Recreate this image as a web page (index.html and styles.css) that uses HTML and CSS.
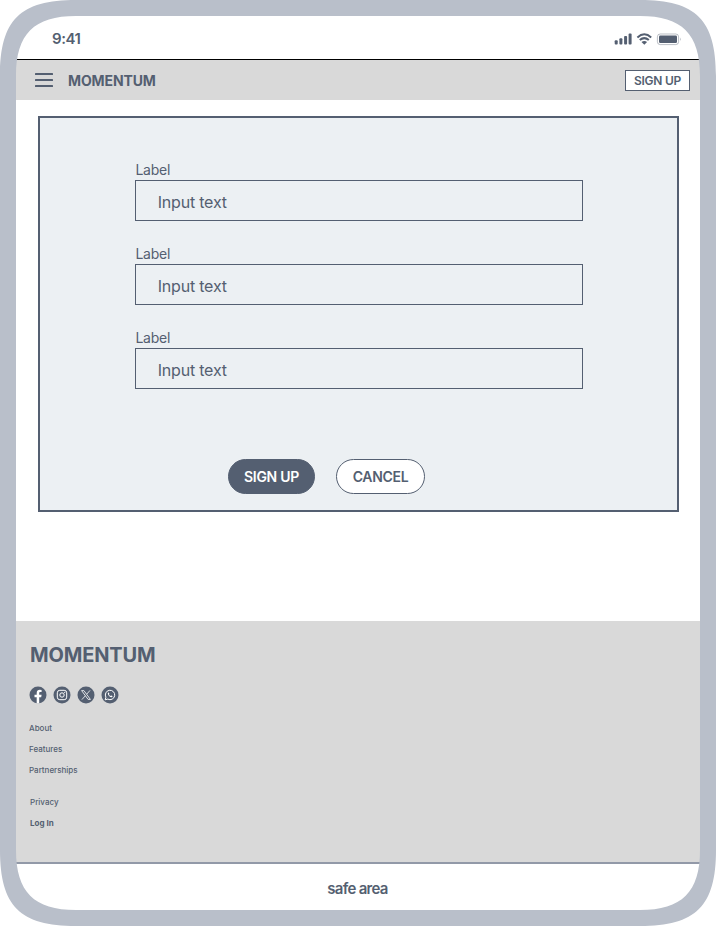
FILE: index.html
```html
<!DOCTYPE html>
<html lang="en">
<head>
<meta charset="utf-8">
<title>Momentum</title>
<link rel="stylesheet" href="styles.css">
</head>
<body>
<div class="device">
  <div class="status-bar">
    <span class="time">9:41</span>
    <svg class="status-icons" width="68" height="14" viewBox="0 0 68 14">
      <g fill="#545f71">
        <rect x="0.7" y="8.3" width="3" height="4.2" rx="0.9"/>
        <rect x="5.4" y="6.3" width="3" height="6.2" rx="0.9"/>
        <rect x="10.1" y="4" width="3" height="8.5" rx="0.9"/>
        <rect x="14.6" y="1.6" width="3" height="10.9" rx="0.9"/>
        <path d="M30.3 12.8L27.5 10Q30.3 7.9 33.1 10Z"/>
        <rect x="45" y="3.6" width="18" height="7.4" rx="1.2"/>
      </g>
      <g fill="none" stroke="#545f71" stroke-width="2">
        <path d="M23.4 5.4Q30.3-.9 37.2 5.4"/>
        <path d="M25.8 8.1Q30.3 4.1 34.8 8.1"/>
      </g>
      <rect x="43.4" y="2" width="21.2" height="10.6" rx="2.8" fill="none" stroke="#545f71" stroke-opacity=".4"/>
      <path d="M66 5.6Q67.6 7.3 66 9.1Z" fill="#545f71" fill-opacity=".45"/>
    </svg>
  </div>
  <header class="header">
    <svg class="menu" width="18" height="14" viewBox="0 0 18 14" fill="#545f71">
      <rect y="0" width="18" height="2" rx=".5"/><rect y="6" width="18" height="2" rx=".5"/><rect y="12" width="18" height="2" rx=".5"/>
    </svg>
    <span class="brand">MOMENTUM</span>
    <button class="header-button">SIGN UP</button>
  </header>
  <main class="main">
    <form class="form">
      <div class="field"><label>Label</label><div class="input">Input text</div></div>
      <div class="field"><label>Label</label><div class="input">Input text</div></div>
      <div class="field"><label>Label</label><div class="input">Input text</div></div>
      <div class="actions">
        <button type="button" class="pill pill-primary">SIGN UP</button>
        <button type="button" class="pill pill-outline">CANCEL</button>
      </div>
    </form>
  </main>
  <footer class="footer">
    <div class="footer-brand">MOMENTUM</div>
    <div class="social">
      <svg width="18" height="18" viewBox="0 0 18 18"><circle cx="9" cy="9" r="8.5" fill="#545f71"/><path d="M7.7 17.4V11.3H5.5V8.7H7.7V7.2C7.7 4.8 9 3.8 10.8 3.8L12.6 4V6.1H11.5C10.5 6.1 10.2 6.6 10.2 7.3V8.7H12.6L12.2 11.3H10.2V17.4Z" fill="#fff"/></svg>
      <svg width="18" height="18" viewBox="0 0 18 18"><circle cx="9" cy="9" r="8.5" fill="#545f71"/><g fill="none" stroke="#fff"><rect x="4.3" y="4.3" width="9.4" height="9.4" rx="2.5"/><circle cx="9" cy="9" r="2.2"/></g><circle cx="11.7" cy="6.3" r=".65" fill="#fff"/></svg>
      <svg width="18" height="18" viewBox="0 0 18 18"><circle cx="9" cy="9" r="8.5" fill="#545f71"/><g fill="none" stroke="#fff" stroke-width=".8"><path d="M4.6 4.6H6.9L13.4 13.4H11.1Z"/><path d="M13 4.4L9.7 8.2M8.3 9.8L4.9 13.6"/></g></svg>
      <svg width="18" height="18" viewBox="0 0 18 18"><circle cx="9" cy="9" r="8.5" fill="#545f71"/><path d="M4.2 13.8L4.9 11.2A4.7 4.7 0 1 1 6.8 13.1Z" fill="none" stroke="#fff"/><path d="M7.3 6.6C6.4 7.2 6.9 8.8 8.1 9.9C9.3 11.1 10.9 11.6 11.5 10.6L11.4 10L10.2 9.4L9.6 10.1C8.9 9.8 8.2 9.1 7.9 8.5L8.4 7.9L7.9 6.7Z" fill="#fff"/></svg>
    </div>
    <nav class="links">
      <a>About</a><a>Features</a><a>Partnerships</a>
    </nav>
    <nav class="links links-account">
      <a>Privacy</a><a class="login">Log In</a>
    </nav>
  </footer>
  <div class="safe-area">safe area</div>
  <svg class="bezel" width="716" height="926" viewBox="0 0 716 926">
    <path fill="#b9bfca" fill-rule="evenodd" d="M0 76C0 20 20 0 76 0H640C696 0 716 20 716 76V850C716 906 696 926 640 926H76C20 926 0 906 0 850ZM16 76C16 34 34 16 76 16H640C682 16 700 34 700 76V850C700 892 682 910 640 910H76C34 910 16 892 16 850Z"/>
  </svg>
</div>
</body>
</html>
```
FILE: styles.css
```css
body { margin: 0; font-family: Inter, "Liberation Sans", sans-serif; color: #545f71; background: #fff; }
.device { position: relative; box-sizing: border-box; width: 716px; height: 926px; padding: 16px; display: flex; flex-direction: column; overflow: hidden; }
.bezel { position: absolute; top: 0; left: 0; pointer-events: none; }
.status-bar { box-sizing: border-box; height: 44px; flex: none; border-bottom: 1px solid #000; display: flex; align-items: center; justify-content: space-between; padding: 2px 18px 0 36px; }
.time { font-size: 15px; font-weight: 600; letter-spacing: -.45px; }
.header { height: 40px; flex: none; background: #d9d9d9; display: flex; align-items: center; padding: 0 10px 0 19px; }
.brand { margin-left: 15px; padding-top: 1px; font-size: 14px; font-weight: 700; letter-spacing: -.12px; }
.header-button { box-sizing: border-box; margin-left: auto; width: 65px; height: 21px; border: 1px solid #545f71; background: #fff; color: inherit; padding: 0; font: 600 12px/19px Inter, sans-serif; letter-spacing: -.25px; }
.main { height: 521px; flex: none; padding: 16px 21px 0 22px; box-sizing: border-box; }
.form { box-sizing: border-box; height: 396px; border: 2px solid #545f71; background: #ecf0f3; padding: 42px 94px 0 95.4px; }
.field { height: 84px; font-weight: 400; }
.field label { display: block; height: 20px; font-size: 14px; line-height: 19px; letter-spacing: -.25px; }
.input { box-sizing: border-box; height: 41px; border: 1px solid #545f71; padding: 2px 21.3px 0; font-size: 16px; line-height: 39px; letter-spacing: -.2px; }
.actions { display: flex; gap: 21px; padding: 47px 0 0 92.6px; }
.pill { box-sizing: border-box; width: 87px; height: 35px; border: 1px solid #545f71; border-radius: 18px; padding: 0; color: inherit; font: 600 14px/33px Inter, sans-serif; letter-spacing: -.3px; }
.pill-primary { background: #545f71; color: #fff; }
.pill-outline { width: 89px; background: #fff; }
.footer { box-sizing: border-box; height: 243px; flex: none; background: #d9d9d9; border-bottom: 2px solid #9299a8; padding: 21px 13px 0; }
.footer-brand { margin-left: 1px; font-size: 20px; line-height: 26px; font-weight: 700; letter-spacing: -.15px; }
.social { display: flex; gap: 5.8px; margin: 18px 0 0 .2px; }
.social svg { flex: none; }
.links { display: flex; flex-direction: column; margin-top: 14px; font-size: 8px; line-height: 21px; font-weight: 500; }
.links-account { margin: 11px 0 0 1px; }
.login { font-weight: 700; }
.safe-area { flex: 1; text-align: center; font-size: 15px; line-height: 50px; font-weight: 600; letter-spacing: -.7px; padding-right: 1px; }
```
